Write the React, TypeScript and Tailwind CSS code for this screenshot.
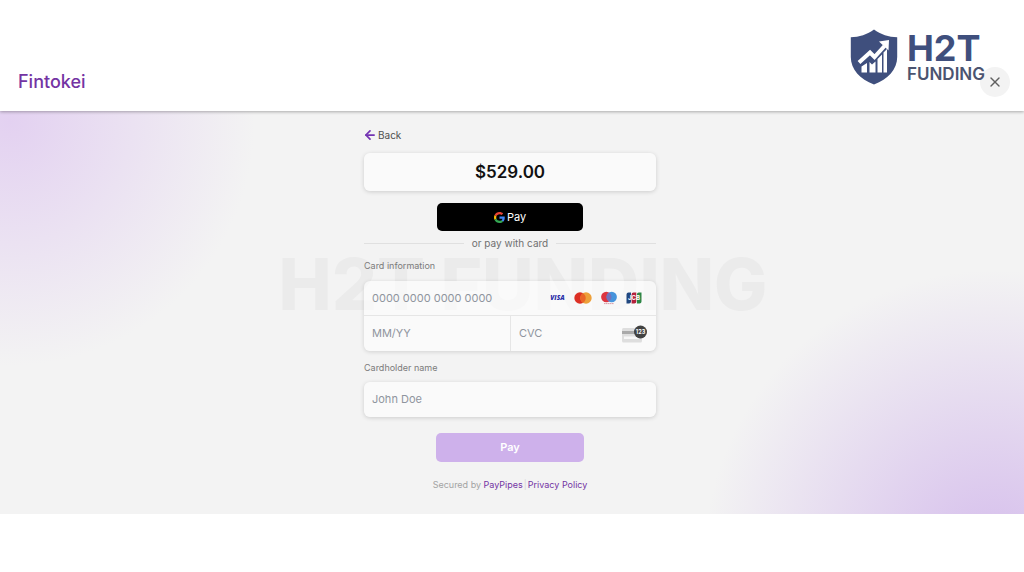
import { ArrowLeft, X } from 'lucide-react';

const ShieldLogo = () => (
    <svg width="48" height="56" viewBox="0 0 48 56" className="shrink-0" aria-hidden="true">
        <path
            d="M24 .5C17.500 5.500 9 8 .8 8.300V28C.8 40.500 10 50 24 55.500 38 50 47.200 40.500 47.200 28V8.300C39 8 30.500 5.500 24 .5Z"
            fill="#3f4f7d"
        />
        <path d="M11.500 37.500 17 34V43.500H11.500ZM19.500 33 22 35.500 25.500 32.500V43.500H19.500ZM27.500 30 32 25.500V43.500H27.500ZM33.500 23.500 37 20V43.500H33.500Z" fill="#fff" />
        <path d="M9 33.500 20 23.500 24.500 28 34.500 17" fill="none" stroke="#fff" strokeWidth="4" />
        <path d="M29 12.500 39 11 38.500 21.500Z" fill="#fff" />
    </svg>
);

const GoogleIcon = () => (
    <svg width="11" height="11" viewBox="0 0 48 48" aria-hidden="true">
        <path fill="#EA4335" d="M24 9.500c3.540 0 6.710 1.220 9.210 3.600l6.850-6.850C35.900 2.380 30.470 0 24 0 14.620 0 6.510 5.380 2.560 13.220l7.980 6.190C12.430 13.720 17.740 9.500 24 9.500z" />
        <path fill="#4285F4" d="M46.980 24.550c0-1.570-.15-3.090-.38-4.550H24v9.020h12.940c-.58 2.960-2.260 5.480-4.780 7.180l7.730 6c4.510-4.180 7.090-10.360 7.090-17.650z" />
        <path fill="#FBBC05" d="M10.530 28.590c-.48-1.450-.76-2.990-.76-4.590s.27-3.140.76-4.590l-7.980-6.190C.92 16.460 0 20.120 0 24c0 3.880.92 7.540 2.560 10.780l7.970-6.190z" />
        <path fill="#34A853" d="M24 48c6.480 0 11.930-2.130 15.890-5.810l-7.730-6c-2.150 1.450-4.920 2.300-8.160 2.300-6.260 0-11.570-4.220-13.470-9.910l-7.980 6.190C6.510 42.620 14.620 48 24 48z" />
    </svg>
);

const CardBrands = () => (
    <div className="flex shrink-0 items-center gap-2">
        <svg width="17" height="12" viewBox="0 0 17 12" role="img" aria-label="Visa">
            <text x="8.500" y="8.400" textAnchor="middle" fontSize="6.500" fontWeight="800" fontStyle="italic" fontFamily="Open Sans, sans-serif" fill="#2a2fa8">VISA</text>
        </svg>
        <svg width="18" height="12" viewBox="0 0 18 12" role="img" aria-label="Mastercard">
            <circle cx="6" cy="6" r="5.700" fill="#dc2f24" />
            <circle cx="12" cy="6" r="5.700" fill="#eda03a" />
            <path d="M9 1.150a5.700 5.700 0 0 1 0 9.700 5.700 5.700 0 0 1 0-9.700Z" fill="#ea6528" />
        </svg>
        <svg width="18" height="14" viewBox="0 0 18 14" role="img" aria-label="Maestro">
            <circle cx="6.300" cy="6" r="5.200" fill="#dd3540" />
            <circle cx="11.700" cy="6" r="5.200" fill="#4694dc" />
            <path d="M9 1.560a5.200 5.200 0 0 1 0 8.880 5.200 5.200 0 0 1 0-8.880Z" fill="#7272bd" />
            <path d="M4 12.600H14" stroke="#d99aa5" strokeWidth="1" strokeDasharray="1.500 .4" />
        </svg>
        <svg width="16" height="12" viewBox="0 0 16 12" role="img" aria-label="JCB">
            <path d="M2.500.5H5V9.500a2 2 0 0 1-2 2H.5V2.500a2 2 0 0 1 2-2Z" fill="#20477f" />
            <path d="M7.500.5H10.300V9.500a2 2 0 0 1-2 2H5.600V2.500a2 2 0 0 1 1.900-2Z" fill="#b3223c" />
            <path d="M12.800.5H15.500V9.500a2 2 0 0 1-2 2H10.900V2.500a2 2 0 0 1 1.900-2Z" fill="#2d8646" />
            <text x="8" y="8" textAnchor="middle" fontSize="6" fontWeight="700" fontFamily="Inter, sans-serif" fill="#fff">JCB</text>
        </svg>
    </div>
);

const CvcIcon = () => (
    <svg width="26" height="20" viewBox="0 0 26 20" className="shrink-0" aria-hidden="true">
        <rect x="0" y="4" width="20" height="14.500" rx="1.500" fill="#dedede" />
        <rect x="0" y="7" width="20" height="3" fill="#a9a9a9" />
        <rect x="2" y="12.500" width="15" height="2.500" fill="#f7f7f7" />
        <circle cx="18.500" cy="8" r="6.500" fill="#424242" />
        <text x="18.500" y="10" textAnchor="middle" fontSize="5.500" fontWeight="700" fontFamily="Inter, sans-serif" fill="#fff">123</text>
    </svg>
);

const inputClass =
    'w-full min-w-0 bg-transparent px-2 text-[11px] text-gray-700 placeholder:text-[#8f959e] outline-none';

const Header = () => (
    <header className="relative z-10 flex items-center justify-between bg-white pt-[67px] pb-[14px] pl-[18px] pr-[14px] shadow-[0_1px_3px_rgba(0,0,0,0.3)]">
        <a href="#" className="text-lg leading-[30px] font-medium text-[#7434a3]">Fintokei</a>
        <button type="button" aria-label="Close" className="flex size-[30px] items-center justify-center rounded-full bg-[#f3f3f3] text-[#606060]">
            <X size={16} strokeWidth={2} />
        </button>

        {/* Partner logo */}
        <div className="pointer-events-none absolute right-[39px] top-[29px] flex gap-[9px] text-[#3f4f7d]">
            <ShieldLogo />
            <div className="flex flex-col">
                <span className="text-[36px] leading-[38px] font-bold">H2T</span>
                <span className="text-[17px] leading-[14px] font-semibold text-[#4b5470]">FUNDING</span>
            </div>
        </div>
    </header>
);

export default function App() {
    return (
        <div className="min-h-screen bg-white font-[Inter,sans-serif]">
            <Header />
            <main className="relative isolate overflow-hidden bg-[#f3f3f3] bg-[radial-gradient(circle_245px_at_10px_10px,#e3d1f1,transparent),radial-gradient(circle_290px_at_calc(100%_-_30px)_calc(100%_+_46px),#d5bdec,transparent)] pt-4 pr-5 pb-[23px] pl-4">
                {/* Watermark */}
                <div aria-hidden="true" className="pointer-events-none absolute inset-x-0 top-[138px] -z-10 pl-[22px] text-center text-[71px] leading-[70px] font-extrabold whitespace-nowrap text-[#ebebeb]">
                    H2T FUNDING
                </div>

                <form className="mx-auto flex w-full max-w-[292px] flex-col" onSubmit={(e) => e.preventDefault()}>
                    <a href="#" className="flex items-center gap-px self-start text-[10px] leading-4 text-[#505050]">
                        <ArrowLeft size={14} strokeWidth={3} className="-ml-px text-[#7434b3]" />
                        Back
                    </a>

                    <div className="mt-[10px] rounded-md bg-white/60 text-center text-[17px] leading-[38px] font-semibold text-[#111] shadow-[0_1px_4px_rgba(0,0,0,0.16)]">
                        $529.00
                    </div>

                    <button type="button" className="mt-3 flex h-7 w-1/2 items-center justify-center gap-[2px] self-center rounded-[5px] bg-black text-[11px] text-white">
                        <GoogleIcon />
                        Pay
                    </button>

                    <div className="mt-1 flex items-center gap-2 text-[10px] leading-4 text-[#707070]">
                        <span className="h-px flex-1 bg-[#e0e0e0]" />
                        or pay with card
                        <span className="h-px flex-1 bg-[#e0e0e0]" />
                    </div>

                    <label htmlFor="card-number" className="mt-[9px] text-[9px] leading-3 text-[#7b7b7b]">Card information</label>
                    <div className="mt-[9px] rounded-md bg-white/60 shadow-[0_1px_4px_rgba(0,0,0,0.14)]">
                        <div className="flex h-[35px] items-center border-b border-[#e6e6e6] pr-[14px]">
                            <input id="card-number" placeholder="0000 0000 0000 0000" className={inputClass} />
                            <CardBrands />
                        </div>
                        <div className="grid h-[35px] grid-cols-2">
                            <input aria-label="Expiry date" placeholder="MM/YY" className={inputClass} />
                            <div className="flex items-center border-l border-[#e6e6e6] pr-2">
                                <input aria-label="Security code" placeholder="CVC" className={inputClass} />
                                <CvcIcon />
                            </div>
                        </div>
                    </div>

                    <label htmlFor="holder" className="mt-[11px] text-[9px] leading-3 text-[#7b7b7b]">Cardholder name</label>
                    <div className="mt-2 flex h-[35px] rounded-md bg-white/60 shadow-[0_1px_4px_rgba(0,0,0,0.16)]">
                        <input id="holder" placeholder="John Doe" className={inputClass} />
                    </div>

                    <button type="submit" className="mt-4 h-[29px] w-[148px] self-center rounded-[5px] bg-[#ceb1eb] text-[11px] font-semibold text-white">
                        Pay
                    </button>

                    <p className="mt-[17px] text-center text-[9px] leading-3 text-[#a3a3a3]">
                        Secured by <a href="#" className="text-[#7434a3]">PayPipes</a>
                        <span className="px-px text-[#d5d5d5]">|</span>
                        <a href="#" className="text-[#7434a3]">Privacy Policy</a>
                    </p>
                </form>
            </main>
        </div>
    );
}
